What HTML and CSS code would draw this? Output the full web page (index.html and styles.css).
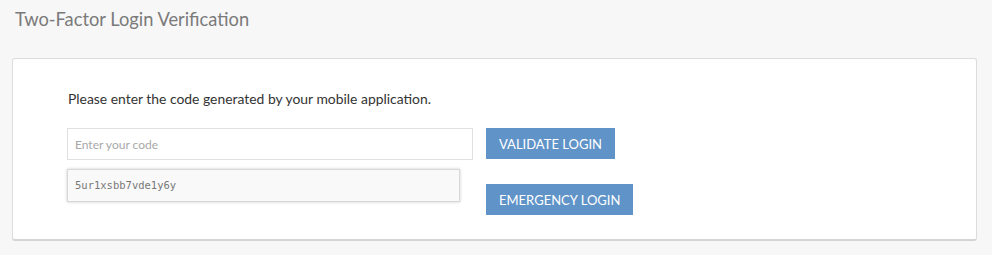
FILE: index.html
```html
<!DOCTYPE html>
<html>
<head>
<meta charset="utf-8">
<link rel="stylesheet" href="styles.css">
</head>
<body>
<h1 class="title">Two-Factor Login Verification</h1>
<div class="card">
  <p class="prompt">Please enter the code generated by your mobile application.</p>
  <div class="form">
    <div class="fields">
      <input class="code-input" type="text" placeholder="Enter your code">
      <div class="emergency-code">5ur1xsbb7vde1y6y</div>
    </div>
    <div class="actions">
      <button class="btn">VALIDATE LOGIN</button>
      <button class="btn btn-emergency">EMERGENCY LOGIN</button>
    </div>
  </div>
</div>
</body>
</html>
```
FILE: styles.css
```css
html, body {
  margin: 0;
  padding: 0;
  background: #f7f7f7;
  font-family: Lato, "Open Sans", sans-serif;
}
.title {
  margin: 0;
  padding: 8px 15px 0;
  height: 50px;
  box-sizing: border-box;
  font-size: 18.3px;
  font-weight: 400;
  color: #7a7a7a;
  line-height: 22px;
}
.card {
  margin: 8px 0 0 12px;
  width: 965px;
  box-sizing: border-box;
  background: #fff;
  border: 1px solid #dcdcdc;
  border-bottom: 2px solid #d4d4d4;
  border-radius: 3px;
  padding: 27px 0 24px 54px;
}
.prompt {
  margin: 0;
  font-size: 13.9px;
  line-height: 26px;
  color: #333;
  padding-left: 1px;
}
.form {
  display: flex;
  gap: 13px;
  margin-top: 16px;
}
.fields {
  display: flex;
  flex-direction: column;
  gap: 9px;
}
.code-input {
  width: 406px;
  height: 32px;
  box-sizing: border-box;
  border: 1px solid #e0e0e0;
  padding: 0 7px;
  font-family: Lato, sans-serif;
  font-size: 12px;
  color: #555;
  outline: none;
  margin: 0;
}
.code-input::placeholder {
  color: #a8a8a8;
}
.emergency-code {
  width: 393px;
  height: 33px;
  box-sizing: border-box;
  background: #f9f9f9;
  border: 1px solid #d8d8d8;
  box-shadow: 0 0 3px rgba(0,0,0,0.2);
  padding: 0 7px;
  font-family: "DejaVu Sans Mono", monospace;
  font-size: 10.5px;
  line-height: 31px;
  color: #777;
}
.actions {
  display: flex;
  flex-direction: column;
  align-items: flex-start;
  gap: 25px;
}
.btn {
  margin: 0;
  height: 31px;
  border: none;
  background: #6094c8;
  color: #fff;
  font-family: Lato, sans-serif;
  font-size: 13px;
  padding: 0 13px;
  cursor: pointer;
}
```
